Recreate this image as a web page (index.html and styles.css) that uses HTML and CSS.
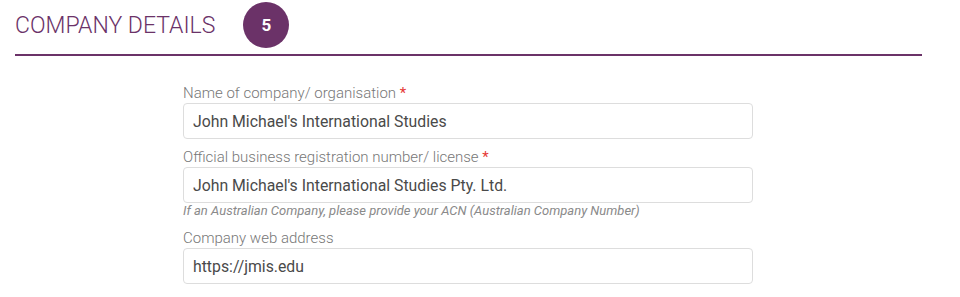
FILE: index.html
```html
<!DOCTYPE html>
<html lang="en">
<head>
  <meta charset="UTF-8" />
  <meta name="viewport" content="width=device-width, initial-scale=1" />
  <title>Company Details</title>
  <link rel="stylesheet" href="styles.css">
</head>
<body>

  <div class="section-head">
    <h2>COMPANY DETAILS</h2>
    <span class="step">5</span>
  </div>

  <form class="details" onsubmit="return false;">
    <div class="field">
      <label for="companyName">Name of company/ organisation <span class="req">*</span></label>
      <input type="text" id="companyName" value="John Michael's International Studies" />
    </div>

    <div class="field">
      <label for="regNumber">Official business registration number/ license <span class="req">*</span></label>
      <input type="text" id="regNumber" value="John Michael's International Studies Pty. Ltd." />
      <div class="hint">If an Australian Company, please provide your ACN (Australian Company Number)</div>
    </div>

    <div class="field">
      <label for="webAddress">Company web address</label>
      <input type="text" id="webAddress" value="https://jmis.edu" />
    </div>
  </form>

</body>
</html>
```

FILE: styles.css
```css
body {
  font-family: Roboto, "Liberation Sans", sans-serif;
  margin: 0;
  padding: 2px 38px 0 15px;
  background: #fff;
}
.section-head {
  display: flex;
  align-items: center;
  gap: 28px;
  padding-bottom: 6px;
  border-bottom: 2px solid #6b3268;
}
.section-head h2 {
  margin: 0;
  font-size: 23px;
  font-weight: 300;
  color: #6b3268;
}
.step {
  width: 46px;
  height: 46px;
  border-radius: 50%;
  background: #6b3268;
  color: #fff;
  font-size: 17px;
  font-weight: bold;
  display: flex;
  align-items: center;
  justify-content: center;
}
.details {
  width: 570px;
  margin: 29px 0 0 168px;
  display: flex;
  flex-direction: column;
  gap: 10px;
}
label {
  display: block;
  font-size: 15px;
  line-height: 16px;
  font-weight: 300;
  color: #777;
  margin-bottom: 2px;
}
.req {
  color: #e53935;
  font-weight: 400;
}
input {
  display: block;
  width: 100%;
  height: 36px;
  padding: 0 9px;
  font-family: inherit;
  font-size: 15.8px;
  color: #4a4a4a;
  border: 1px solid #ddd;
  border-radius: 4px;
  box-sizing: border-box;
}
.hint {
  font-size: 13px;
  line-height: 15px;
  font-style: italic;
  color: #8a8a8a;
  margin-bottom: 2px;
}
```
